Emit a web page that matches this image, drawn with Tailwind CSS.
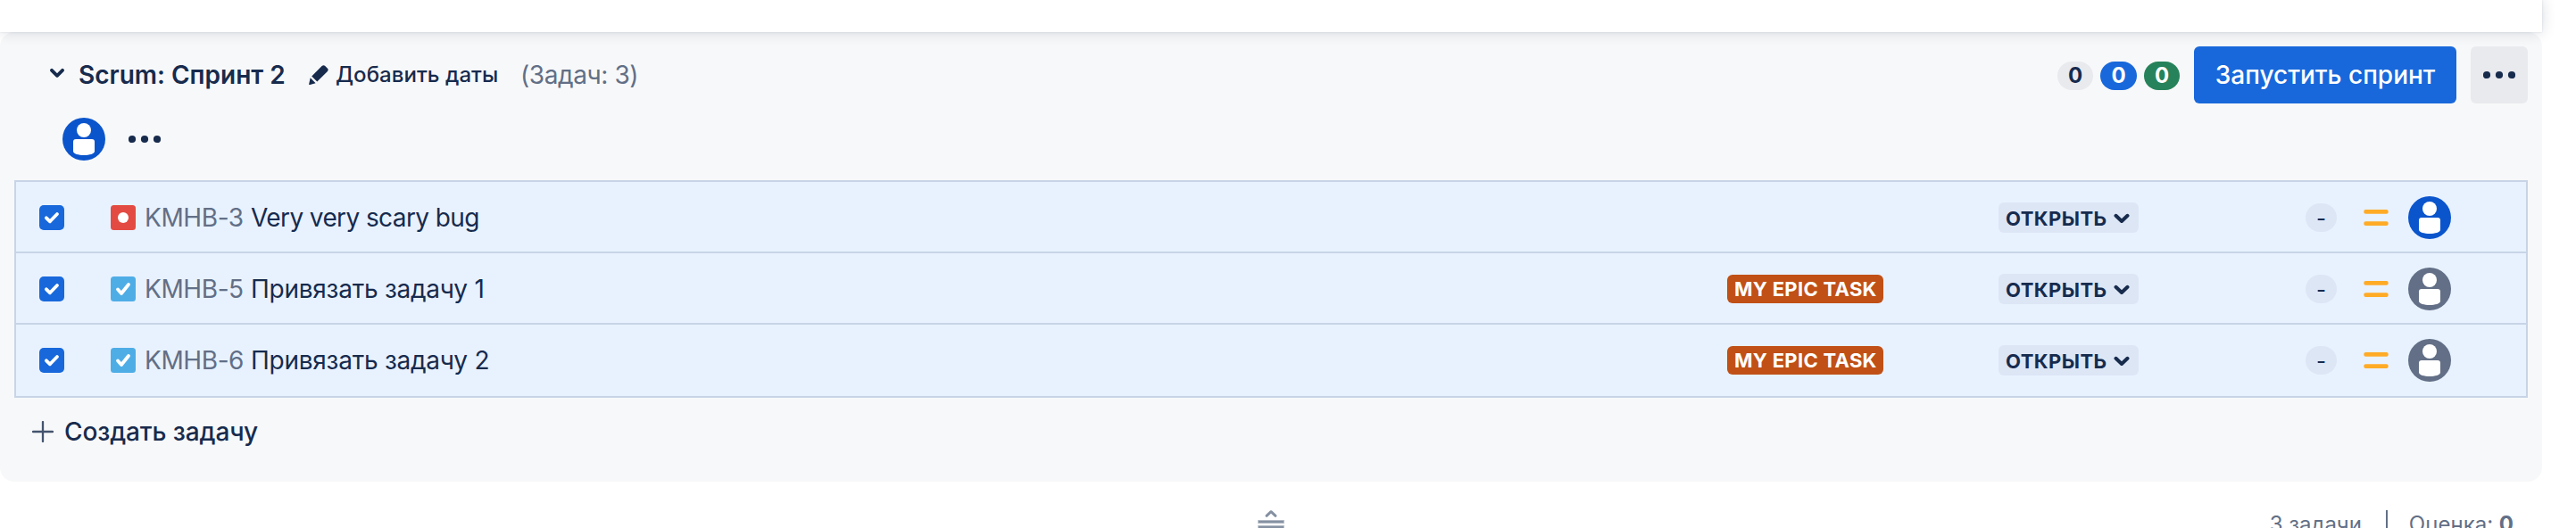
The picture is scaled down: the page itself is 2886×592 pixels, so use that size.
<!DOCTYPE html>
<html lang="ru">
<head>
<meta charset="utf-8">
<title>Scrum: Спринт 2</title>
<script src="https://cdn.jsdelivr.net/npm/@tailwindcss/browser@4"></script>
</head>
<body class="h-[592px] w-[2886px] overflow-hidden bg-white font-['Inter',sans-serif] text-[28px] leading-10 whitespace-nowrap text-[#172B4D]">

<!-- shared symbols -->
<svg class="hidden">
  <symbol id="person" viewBox="0 0 48 48">
    <circle cx="24" cy="24" r="24" fill="currentColor"/>
    <circle cx="24" cy="14" r="8" fill="#fff"/>
    <path d="M12 27a3 3 0 0 1 3-3h18a3 3 0 0 1 3 3v10.500C36 40.500 30 42 24 42s-12-1.500-12-4.500z" fill="#fff"/>
  </symbol>
  <symbol id="checked" viewBox="0 0 28 28">
    <rect width="28" height="28" rx="5" fill="#1868DB"/>
    <path d="M7.900 14.300l4.100 4 8-8.300" fill="none" stroke="#fff" stroke-width="3.800" stroke-linecap="round" stroke-linejoin="round"/>
  </symbol>
  <symbol id="task" viewBox="0 0 28 28">
    <rect width="28" height="28" rx="3.500" fill="#4FADE6"/>
    <path d="M8 14.500l4 4.500 8-10" fill="none" stroke="#fff" stroke-width="3.800" stroke-linecap="round" stroke-linejoin="round"/>
  </symbol>
  <symbol id="bug" viewBox="0 0 28 28">
    <rect width="28" height="28" rx="3.500" fill="#E34B42"/>
    <circle cx="14" cy="14" r="6" fill="#fff"/>
  </symbol>
  <symbol id="down" viewBox="0 0 18 12">
    <path d="M2.500 2.800l6.500 6.200 6.500-6.200" fill="none" stroke="#172B4D" stroke-width="4" stroke-linecap="round" stroke-linejoin="round"/>
  </symbol>
  <symbol id="medium" viewBox="0 0 28 20">
    <rect x="0.300" y="1" width="27.400" height="4.800" rx="2" fill="#FFAB26"/>
    <rect x="0.300" y="14.300" width="27.400" height="4.800" rx="2" fill="#FFAB26"/>
  </symbol>
</svg>

<header class="relative z-10 h-9 w-[2848px] bg-white shadow-[0_0_2px_rgba(9,30,66,0.12),0_0_16px_rgba(9,30,66,0.16)]"></header>

<main class="h-[504px] w-[2848px] rounded-2xl bg-[#F7F8F9] px-4 pt-4">
  <div class="flex h-16 items-center">
    <svg class="mt-[-4px] ml-10 h-3 w-4" viewBox="0 0 16 12"><path d="M2 2.800l6 6 6-6" fill="none" stroke="#172B4D" stroke-width="3.800" stroke-linecap="round" stroke-linejoin="round"/></svg>
    <h2 class="ml-4 w-[257px] font-semibold">Scrum: Спринт 2</h2>
    <svg class="h-6 w-6" viewBox="0 0 24 24">
      <path d="M4.200 13.500L15.600 2.100c1.100-1.100 2.400-1.300 3.400-.3l3 3c1 1 .8 2.300-.3 3.400L10.300 19.600z" fill="#172B4D"/>
      <path d="M2.700 15.300l5.900 5.900-6.300 1.700c-.9.200-1.300-.3-1.100-1z" fill="#172B4D"/>
    </svg>
    <span class="mt-[-1px] ml-[7px] w-[207px] text-2xl font-medium tracking-[0.05px]">Добавить даты</span>
    <span class="tracking-[-0.4px] text-[#626F86]">(Задач: 3)</span>

    <div class="ml-auto flex items-center">
      <div class="mt-0.5 flex gap-2 text-center text-2xl leading-8 font-bold">
        <span class="h-8 w-10 rounded-2xl bg-[#E9EAEE]">0</span>
        <span class="h-8 w-[41px] rounded-2xl bg-[#1868DB] text-white">0</span>
        <span class="h-8 w-10 rounded-2xl bg-[#26825A] text-white">0</span>
      </div>
      <button class="ml-4 flex h-16 w-[294px] items-center justify-center rounded-md bg-[#1868DB] font-medium text-white">Запустить спринт</button>
      <button class="ml-4 flex h-16 w-16 items-center justify-center rounded-md bg-[#E9EAEE]">
        <svg class="h-2.5 w-9" viewBox="0 0 36 10" fill="#172B4D"><circle cx="4" cy="5" r="4.100"/><circle cx="18" cy="5" r="4.100"/><circle cx="32" cy="5" r="4.100"/></svg>
      </button>
    </div>
  </div>

  <div class="mt-4 flex h-12 items-center pl-[54px]">
    <svg class="h-12 w-12 text-[#0B55CC]"><use href="#person"/></svg>
    <svg class="ml-[26px] h-2.5 w-9" viewBox="0 0 36 10" fill="#172B4D"><circle cx="4" cy="5" r="4.100"/><circle cx="18" cy="5" r="4.100"/><circle cx="32" cy="5" r="4.100"/></svg>
  </div>

  <section class="mt-[22px] h-[244px] border-2 border-[#C8D4E6] bg-[#E8F2FF]">
    <div class="flex h-20 items-center border-b-2 border-[#C8D4E6] pt-0.5 pl-[26px]">
      <svg class="h-7 w-7"><use href="#checked"/></svg>
      <svg class="ml-[52px] h-7 w-7"><use href="#bug"/></svg>
      <span class="ml-2.5 w-[119px] tracking-[-0.4px] text-[#626F86]">KMHB-3</span>
      <span class="w-[1654px] tracking-[-0.6px]">Very very scary bug</span>
      <span class="w-[304px]"></span>
      <span class="flex h-[34px] w-[157px] items-center rounded-md bg-[#DDE6F5] pt-px pl-2 text-[22px] font-bold tracking-[0.45px]">ОТКРЫТЬ<svg class="ml-[7px] h-3 w-[18px]"><use href="#down"/></svg></span>
      <span class="ml-[187px] h-8 w-[35px] rounded-2xl bg-[#DDE6F5] text-center text-2xl leading-[33px]">-</span>
      <svg class="ml-[30px] h-5 w-7"><use href="#medium"/></svg>
      <svg class="ml-[22px] h-12 w-12 text-[#0B55CC]"><use href="#person"/></svg>
    </div>
    <div class="flex h-20 items-center border-b-2 border-[#C8D4E6] pt-0.5 pl-[26px]">
      <svg class="h-7 w-7"><use href="#checked"/></svg>
      <svg class="ml-[52px] h-7 w-7"><use href="#task"/></svg>
      <span class="ml-2.5 w-[119px] tracking-[-0.4px] text-[#626F86]">KMHB-5</span>
      <span class="w-[1654px] tracking-[-0.25px]">Привязать задачу 1</span>
      <span class="mr-[129px] flex h-8 w-[175px] items-center rounded-md bg-[#C05016] pl-2 text-[22px] font-bold tracking-[0.3px] text-white">MY EPIC TASK</span>
      <span class="flex h-[34px] w-[157px] items-center rounded-md bg-[#DDE6F5] pt-px pl-2 text-[22px] font-bold tracking-[0.45px]">ОТКРЫТЬ<svg class="ml-[7px] h-3 w-[18px]"><use href="#down"/></svg></span>
      <span class="ml-[187px] h-8 w-[35px] rounded-2xl bg-[#DDE6F5] text-center text-2xl leading-[33px]">-</span>
      <svg class="ml-[30px] h-5 w-7"><use href="#medium"/></svg>
      <svg class="ml-[22px] h-12 w-12 text-[#626F86]"><use href="#person"/></svg>
    </div>
    <div class="flex h-20 items-center pl-[26px]">
      <svg class="h-7 w-7"><use href="#checked"/></svg>
      <svg class="ml-[52px] h-7 w-7"><use href="#task"/></svg>
      <span class="ml-2.5 w-[119px] tracking-[-0.4px] text-[#626F86]">KMHB-6</span>
      <span class="w-[1654px] tracking-[-0.25px]">Привязать задачу 2</span>
      <span class="mr-[129px] flex h-8 w-[175px] items-center rounded-md bg-[#C05016] pl-2 text-[22px] font-bold tracking-[0.3px] text-white">MY EPIC TASK</span>
      <span class="flex h-[34px] w-[157px] items-center rounded-md bg-[#DDE6F5] pt-px pl-2 text-[22px] font-bold tracking-[0.45px]">ОТКРЫТЬ<svg class="ml-[7px] h-3 w-[18px]"><use href="#down"/></svg></span>
      <span class="ml-[187px] h-8 w-[35px] rounded-2xl bg-[#DDE6F5] text-center text-2xl leading-[33px]">-</span>
      <svg class="ml-[30px] h-5 w-7"><use href="#medium"/></svg>
      <svg class="ml-[22px] h-12 w-12 text-[#626F86]"><use href="#person"/></svg>
    </div>
  </section>

  <button class="mt-[18px] flex h-10 items-center pl-5 font-medium">
    <svg class="h-6 w-6" viewBox="0 0 24 24"><path d="M12 1v22M1 12h22" stroke="#44546F" stroke-width="2.300" stroke-linecap="round"/></svg>
    <span class="ml-3 tracking-[-0.1px]">Создать задачу</span>
  </button>
</main>

<footer class="flex h-[52px] w-[2848px] items-start text-2xl text-[#626F86]">
  <svg class="mt-[30px] ml-[1408px] h-[22px] w-8" viewBox="0 0 32 22">
    <path d="M11 8.300l5-4.600 5 4.600" fill="none" stroke="#8590A2" stroke-width="3" stroke-linecap="round" stroke-linejoin="round"/>
    <path d="M1 13h30v4H1zM1 19h30v4H1z" fill="#C1C7D0"/>
    <path d="M2 13.800h28v2.400H2zM2 19.800h28v2.400H2z" fill="#8590A2"/>
  </svg>
  <div class="ml-auto flex pt-8 pr-8">
    <span class="tracking-[-0.05px]">3 задачи</span>
    <span class="mr-6 ml-[27px] h-8 w-0.5 bg-[#626F86]"></span>
    <span>Оценка: <b class="font-bold">0</b></span>
  </div>
</footer>
</body>
</html>
